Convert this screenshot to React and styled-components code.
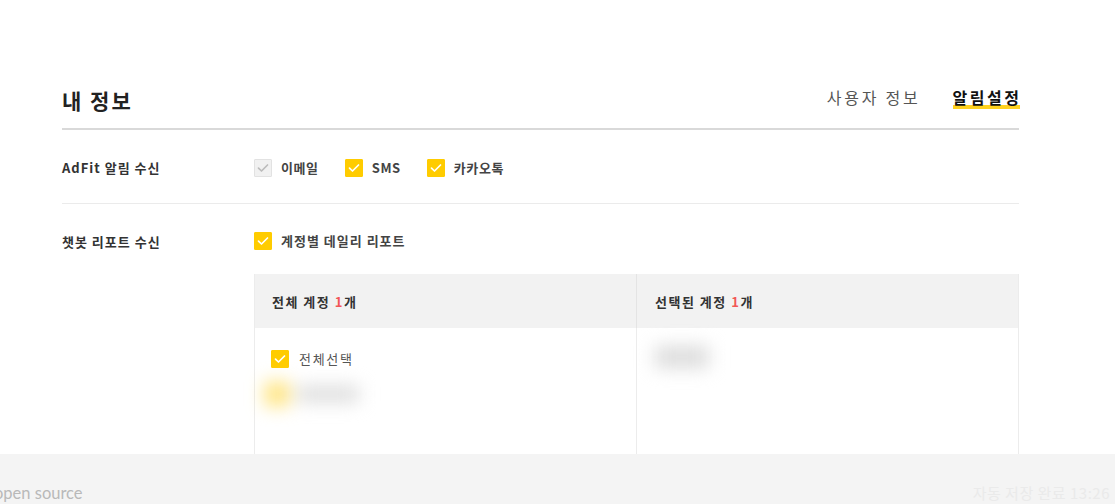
import React from "react";
import styled, { createGlobalStyle } from "styled-components";

const GlobalStyle = createGlobalStyle`
  html, body { margin: 0; padding: 0; background: #fff; }
  body { font-family: "Noto Sans CJK KR", "Noto Sans", sans-serif; color: #333; }
  * { box-sizing: border-box; }
`;

const Shell = styled.div`
  height: 504px;
  display: flex;
  flex-direction: column;
  overflow: hidden;
`;

const Main = styled.main`
  flex: 1;
  overflow: hidden;
  padding-left: 62px;
`;

const Content = styled.div`
  width: 957px;
`;

const Header = styled.header`
  display: flex;
  justify-content: space-between;
  align-items: center;
  padding: 85px 0 13px;
  border-bottom: 2px solid #d9d9d9;
`;

const Title = styled.h1`
  margin: 0;
  font-size: 21px;
  line-height: 30px;
  font-weight: 700;
  color: #222;
  letter-spacing: 2px;
`;

const Tabs = styled.nav`
  display: flex;
  gap: 32px;
  margin-top: -6px;
`;

const Tab = styled.a`
  position: relative;
  font-size: 16px;
  line-height: 24px;
  color: ${(p) => (p.$active ? "#111" : "#555")};
  font-weight: ${(p) => (p.$active ? 700 : 400)};
  letter-spacing: ${(p) => (p.$active ? "2.5px" : "2.8px")};
  margin-right: ${(p) => (p.$active ? "-2.5px" : "0")};
  z-index: 0;
  &::after {
    content: "";
    display: ${(p) => (p.$active ? "block" : "none")};
    position: absolute;
    left: 0;
    right: 2px;
    bottom: 0;
    height: 4px;
    background: #ffd21f;
    z-index: -1;
  }
`;

const Row = styled.section`
  display: grid;
  grid-template-columns: 192px 1fr;
  padding: ${(p) => p.$pad};
  border-bottom: ${(p) => (p.$last ? "none" : "1px solid #ebebeb")};
`;

const Label = styled.div`
  font-size: 13px;
  line-height: 18px;
  font-weight: 700;
  color: #333;
  letter-spacing: 1px;
  padding-top: 1px;
`;

const Options = styled.div`
  display: flex;
  flex-direction: column;
  gap: 24px;
`;

const OptionLine = styled.div`
  display: flex;
  align-items: center;
  gap: 26px;
`;

const Check = styled.label`
  display: inline-flex;
  align-items: center;
  gap: ${(p) => p.$gap || 9}px;
  font-size: 13px;
  line-height: 18px;
  font-weight: ${(p) => (p.$weight ? p.$weight : 700)};
  letter-spacing: ${(p) => p.$ls || "0.6px"};
  color: ${(p) => p.$color || "#444"};
`;

const Box = styled.span`
  width: 18px;
  height: 18px;
  flex: none;
  display: inline-flex;
  align-items: center;
  justify-content: center;
  border-radius: 1px;
  background: ${(p) => (p.$disabled ? "#f1f1f1" : "#ffcc00")};
  border: 1px solid ${(p) => (p.$disabled ? "#e2e2e2" : "#ffcc00")};
`;

const CheckBox = ({ disabled }) => (
  <Box $disabled={disabled}>
    <svg width="12" height="10" viewBox="0 0 12 10" fill="none">
      <path
        d="M1.5 5.2 L4.5 8 L10.5 2"
        stroke={disabled ? "#bcbcbc" : "#fff"}
        strokeWidth="1.7"
        strokeLinecap="round"
        strokeLinejoin="round"
      />
    </svg>
  </Box>
);

const Table = styled.div`
  display: grid;
  grid-template-columns: 381px 1fr;
  grid-template-rows: 54px 1fr;
  border: 1px solid #ececec;
  border-top: none;
  height: 220px;
`;

const HeadCell = styled.div`
  background: #f2f2f2;
  display: flex;
  align-items: center;
  padding-left: ${(p) => p.$pl}px;
  font-size: 13px;
  font-weight: 700;
  letter-spacing: 1.5px;
  color: #333;
  border-left: ${(p) => (p.$divider ? "1px solid #e4e4e4" : "none")};
`;

const Count = styled.span`
  color: #f25757;
`;

const BodyCell = styled.div`
  display: flex;
  flex-direction: column;
  align-items: flex-start;
  padding: ${(p) => p.$pad};
  border-left: ${(p) => (p.$divider ? "1px solid #ececec" : "none")};
`;

const Blurred = styled.div`
  display: flex;
  align-items: center;
  gap: 8px;
  filter: blur(9px);
  margin: ${(p) => p.$m};
`;

const BlurDot = styled.span`
  width: 24px;
  height: 24px;
  background: #ffe37a;
`;

const BlurText = styled.span`
  width: ${(p) => p.$w}px;
  height: ${(p) => p.$h || 16}px;
  background: #dcdcdc;
`;

const Footer = styled.footer`
  height: 50px;
  flex: none;
  background: #f4f4f4;
  display: flex;
  justify-content: space-between;
  align-items: flex-end;
  padding: 0 5px 1px 0;
`;

const OpenSource = styled.span`
  margin-left: -6px;
  font-family: Lato, "Open Sans", sans-serif;
  font-size: 16.5px;
  line-height: 20px;
  color: #b9b9b9;
`;

const Saved = styled.span`
  font-size: 15px;
  line-height: 20px;
  letter-spacing: 0.5px;
  color: #eaeaea;
`;

export default function App() {
  return (
    <>
      <GlobalStyle />
      <Shell>
        <Main>
          <Content>
            <Header>
              <Title>내 정보</Title>
              <Tabs>
                <Tab>사용자 정보</Tab>
                <Tab $active>알림설정</Tab>
              </Tabs>
            </Header>

            <Row $pad="28px 0 26px">
              <Label>AdFit 알림 수신</Label>
              <OptionLine>
                <Check>
                  <CheckBox disabled />
                  이메일
                </Check>
                <Check>
                  <CheckBox />
                  SMS
                </Check>
                <Check>
                  <CheckBox />
                  카카오톡
                </Check>
              </OptionLine>
            </Row>

            <Row $pad="28px 0 0" $last>
              <Label>챗봇 리포트 수신</Label>
              <Options>
                <Check $ls="1px">
                  <CheckBox />
                  계정별 데일리 리포트
                </Check>
                <Table>
                  <HeadCell $pl={17}>
                    <span>
                      전체 계정 <Count>1</Count>개
                    </span>
                  </HeadCell>
                  <HeadCell $pl={18} $divider>
                    <span>
                      선택된 계정 <Count>1</Count>개
                    </span>
                  </HeadCell>
                  <BodyCell $pad="22px 0 0 16px">
                    <Check $weight={400} $color="#555" $ls="1.7px" $gap={10}>
                      <CheckBox />
                      전체선택
                    </Check>
                    <Blurred $m="14px 0 0 -6px">
                      <BlurDot />
                      <BlurText $w={62} />
                    </Blurred>
                  </BodyCell>
                  <BodyCell $pad="12px 0 0 18px" $divider>
                    <Blurred $m="6px 0 0 0">
                      <BlurText $w={54} $h={22} />
                    </Blurred>
                  </BodyCell>
                </Table>
              </Options>
            </Row>
          </Content>
        </Main>
        <Footer>
          <OpenSource>open source</OpenSource>
          <Saved>자동 저장 완료 13:26</Saved>
        </Footer>
      </Shell>
    </>
  );
}
